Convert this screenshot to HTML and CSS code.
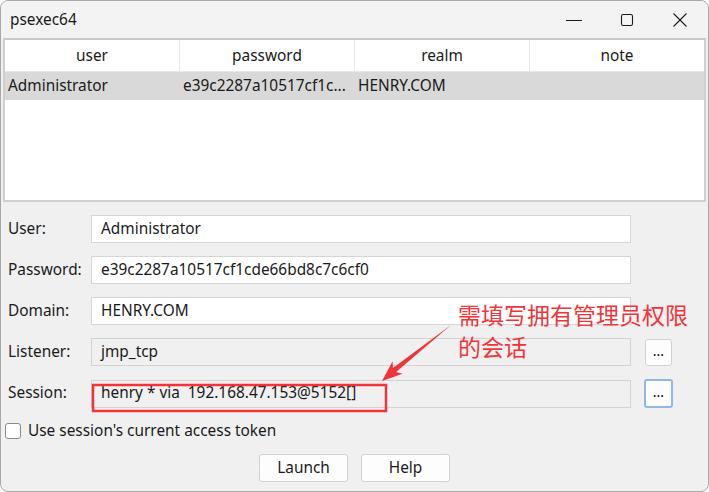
FILE: index.html
```html
<!DOCTYPE html>
<html>
<head>
<meta charset="utf-8">
<link rel="stylesheet" href="styles.css">
</head>
<body>
<div class="window">
  <div class="titlebar">
    <span class="title">psexec64</span>
    <div class="controls">
      <span class="ctl"><svg width="18" height="18" viewBox="0 0 18 18"><path d="M1 9.5h16" stroke="#1a1a1a" stroke-width="1.1"/></svg></span>
      <span class="ctl"><svg width="18" height="18" viewBox="0 0 18 18"><rect x="3.5" y="3.5" width="11" height="11" rx="1.8" fill="none" stroke="#1a1a1a" stroke-width="1.1"/></svg></span>
      <span class="ctl"><svg width="18" height="18" viewBox="0 0 18 18"><path d="M2.5 2.5l13 13M15.5 2.5l-13 13" stroke="#1a1a1a" stroke-width="1.1"/></svg></span>
    </div>
  </div>
  <div class="table">
    <div class="thead">
      <div class="th">user</div>
      <div class="th">password</div>
      <div class="th">realm</div>
      <div class="th">note</div>
    </div>
    <div class="trow selected">
      <div class="td">Administrator</div>
      <div class="td">e39c2287a10517cf1c...</div>
      <div class="td">HENRY.COM</div>
      <div class="td"></div>
    </div>
  </div>
  <div class="form">
    <label class="lbl">User:</label>
    <div class="input">Administrator</div>
    <div></div>
    <label class="lbl">Password:</label>
    <div class="input">e39c2287a10517cf1cde66bd8c7c6cf0</div>
    <div></div>
    <label class="lbl">Domain:</label>
    <div class="input">HENRY.COM</div>
    <div></div>
    <label class="lbl">Listener:</label>
    <div class="input disabled">jmp_tcp</div>
    <button class="dots">...</button>
    <label class="lbl">Session:</label>
    <div class="input disabled">henry * via &nbsp;192.168.47.153@5152[]</div>
    <button class="dots focus">...</button>
  </div>
  <div class="check">
    <span class="box"></span>
    <span>Use session's current access token</span>
  </div>
  <div class="buttons">
    <button class="btn">Launch</button>
    <button class="btn">Help</button>
  </div>

  <div class="note">需填写拥有管理员权限<br>的会话</div>
  <svg class="overlay" width="709" height="492" viewBox="0 0 709 492">
    <rect x="93" y="385" width="293" height="26" fill="none" stroke="#f0353a" stroke-width="2.5"/>
    <polygon points="451,325 396.1,372 402.6,373.8 382,381 392.6,361.2 392.9,368" fill="#f0353a"/>
  </svg>
</div>
</body>
</html>
```
FILE: styles.css
```css
* { box-sizing: border-box; }
html, body { margin: 0; padding: 0; background: #ffffff; }
body {
  width: 709px;
  height: 492px;
  font-family: "Noto Sans", "Open Sans", sans-serif;
  font-size: 15.4px;
  color: #1a1a1a;
}
.window {
  position: relative;
  width: 709px;
  height: 492px;
  background: #f0f0f0;
  border: 1px solid #a8a8a8;
  border-radius: 8px;
  overflow: hidden;
  display: flex;
  flex-direction: column;
}
.titlebar {
  height: 37px;
  flex: none;
  display: flex;
  align-items: center;
  justify-content: space-between;
  background: #f3f3f3;
}
.title {
  padding-left: 9px;
  font-size: 15.4px;
}
.controls {
  display: flex;
  align-items: center;
  padding-right: 19px;
  gap: 35px;
}
.ctl { display: flex; width: 18px; height: 18px; }
.table {
  margin: 0 2px 0 2px;
  height: 164px;
  flex: none;
  background: #fff;
  border: 2px solid #cfcfcf;
  border-top-color: #c8c8c8;
}
.thead, .trow {
  display: grid;
  grid-template-columns: 175px 175px 175px 1fr;
}
.thead { height: 32px; border-bottom: 1px solid #e8e8e8; }
.th {
  display: flex;
  align-items: center;
  justify-content: center;
  border-right: 1px solid #e6e6e6;
}
.th:last-child { border-right: none; }
.trow { height: 28px; }
.trow.selected { background: #d9d9d9; }
.td {
  display: flex;
  align-items: center;
  padding-left: 3px;
  padding-bottom: 2px;
  white-space: nowrap;
}
.form {
  margin-top: 13px;
  display: grid;
  grid-template-columns: 69px 540px 27px;
  column-gap: 14px;
  row-gap: 13px;
  padding-left: 7px;
  align-items: center;
}
.lbl { padding-bottom: 2px; white-space: nowrap; }
.input {
  height: 28px;
  background: #fff;
  border: 1px solid #d5d5d5;
  display: flex;
  align-items: center;
  padding-left: 9px;
  padding-bottom: 2px;
  white-space: pre;
}
.input.disabled { background: #f0f0f0; border-color: #d3d3d3; }
.dots {
  width: 27px;
  height: 27px;
  background: #fdfdfd;
  border: 1px solid #d0d0d0;
  border-radius: 3px;
  font-family: inherit;
  font-size: 14px;
  padding: 0 0 3px;
  color: #000;
  line-height: 1;
}
.dots.focus {
  width: 29px;
  height: 29px;
  margin-left: -1px;
  border: 2px solid #8fb9e3;
}
.check {
  margin-top: 12px;
  display: flex;
  align-items: center;
  gap: 7px;
  padding-left: 4px;
}
.box {
  width: 16px;
  height: 16px;
  background: #fff;
  border: 1px solid #8a8a8a;
  border-radius: 3px;
}
.buttons {
  margin-top: 13px;
  display: flex;
  justify-content: center;
  gap: 13px;
}
.btn {
  width: 89px;
  height: 28px;
  background: #fdfdfd;
  border: 1px solid #d0d0d0;
  border-radius: 3px;
  font-family: inherit;
  font-size: 15.4px;
  color: #1a1a1a;
  padding: 0 0 2px;
}
.note {
  position: absolute;
  left: 457px;
  top: 297px;
  font-family: "Noto Sans CJK SC", sans-serif;
  font-size: 23px;
  line-height: 32px;
  color: #f0353a;
}
.overlay {
  position: absolute;
  left: -1px;
  top: -1px;
  pointer-events: none;
}
```
